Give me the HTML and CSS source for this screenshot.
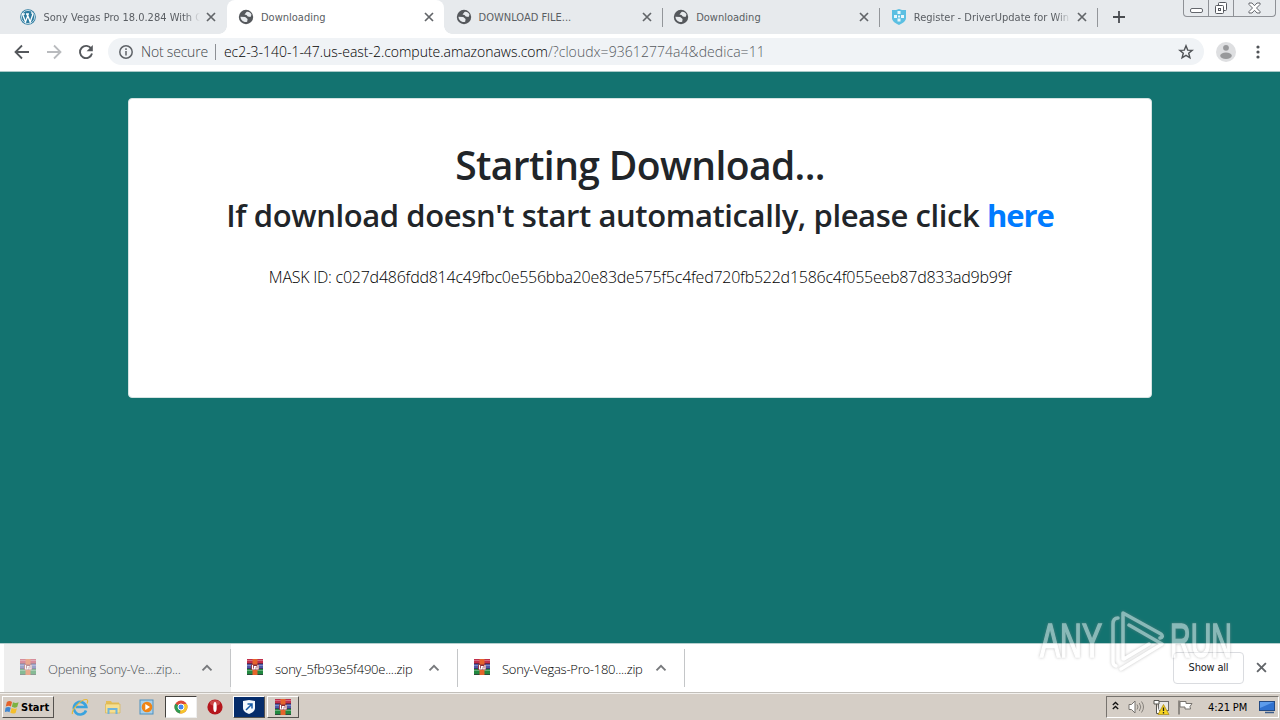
FILE: index.html
```html
<!DOCTYPE html>
<html lang="en">
<head>
    <meta charset="UTF-8">
    <meta name="viewport" content="width=device-width, initial-scale=1.0">
    <title>Downloading</title>
    <link rel="stylesheet" href="styles.css">
</head>
<body>
    <!-- Shared icons -->
    <svg width="0" height="0" class="defs">
        <symbol id="globe" viewBox="0 0 16 16">
            <circle cx="8" cy="8" r="7.2" fill="#55585c"/>
            <path d="M8.500 3c2-.6 4.300.8 5 2.800l-1 2.200-2.700-.6L8.500 6 6.500 5.600zM2.400 7.800l4.800.3L9.600 10l-.4 2.800C6 13.800 2.800 11.500 2.400 7.800z" fill="#e7eaed"/>
        </symbol>
        <symbol id="close" viewBox="0 0 10 10">
            <path d="M1 1l8 8M9 1L1 9" fill="none" stroke="#626569" stroke-width="1.700"/>
        </symbol>
        <symbol id="caret" viewBox="0 0 12 8">
            <path d="M1.500 6.300L6 1.800l4.500 4.500" fill="none" stroke="#77797c" stroke-width="1.900"/>
        </symbol>
        <symbol id="rar" viewBox="0 0 16 16">
            <path d="M0 0h16v5H0z" fill="#c02f4c"/>
            <path d="M0 5h16v5H0z" fill="#4a58a8"/>
            <path d="M0 10h16v6H0z" fill="#21883f"/>
            <path d="M0 1.500h16M0 6.500h16M0 11.500h16" stroke="#fff" stroke-opacity=".3"/>
            <path d="M0 4.500h16M0 9.500h16M0 15.500h16" stroke="#33203a" stroke-opacity=".6"/>
            <path d="M5.500 0h5v16h-5z" fill="#e5642c"/>
            <path d="M4 5.500h8v5.500H4z" fill="#8a2c38"/>
            <path d="M5.500 6v4h2V7.500h1.500V10h2V6" fill="none" stroke="#fff" stroke-width="1.200"/>
        </symbol>
    </svg>

    <!-- Tab strip -->
    <div class="tabs">
        <div class="tab">
            <svg class="favicon" viewBox="0 0 16 16">
                <circle cx="8" cy="8" r="7.800" fill="#2b7a9f"/>
                <circle cx="8" cy="8" r="6.600" fill="none" stroke="#dcecf3" stroke-width=".8"/>
                <path d="M2.500 5l3 8 2.200-6L6.800 5M7.200 5l3 8 2.600-7.500-1.300-2.200M1.800 5h3M6 5h3" fill="none" stroke="#fff" stroke-width="1.300"/>
            </svg>
            <span class="title fade">Sony Vegas Pro 18.0.284 With C</span>
            <svg class="close"><use href="#close"/></svg>
        </div>
        <div class="tab active">
            <svg class="favicon"><use href="#globe"/></svg>
            <span class="title">Downloading</span>
            <svg class="close"><use href="#close"/></svg>
        </div>
        <div class="tab">
            <svg class="favicon"><use href="#globe"/></svg>
            <span class="title">DOWNLOAD FILE...</span>
            <svg class="close"><use href="#close"/></svg>
        </div>
        <div class="tab line">
            <svg class="favicon"><use href="#globe"/></svg>
            <span class="title">Downloading</span>
            <svg class="close"><use href="#close"/></svg>
        </div>
        <div class="tab line">
            <svg class="favicon" viewBox="0 0 16 16">
                <path d="M1 1h4l3-1 3 1h4v8c0 3-3 5-7 7-4-2-7-4-7-7z" fill="#5bbfe2"/>
                <path d="M6.500 2h3v3h-3zM6.500 9.500h3v3h-3zM3 6h3v3H3zM10 6h3v3h-3zM7 6.500h2v2H7z" fill="#e9f7fc"/>
            </svg>
            <span class="title fade">Register - DriverUpdate for Win</span>
            <svg class="close"><use href="#close"/></svg>
        </div>
        <div class="new-tab">
            <svg width="12" height="12" viewBox="0 0 12 12"><path d="M6 0v12M0 6h12" stroke="#494c50" stroke-width="1.800"/></svg>
        </div>
        <div class="window-buttons">
            <span><svg width="13" height="6"><rect x=".5" y=".5" width="12" height="4" rx="1.500" fill="#fff" stroke="#64676d"/></svg></span>
            <span><svg width="14" height="13" fill="#fff" stroke="#55585e"><rect x="4.500" y=".5" width="8" height="8" rx="1"/><rect x="1.500" y="3.500" width="8" height="8" rx="1"/><rect x="4.500" y="6.500" width="2" height="2"/></svg></span>
            <span><svg width="13" height="12" viewBox="0 0 13 12"><path d="M1 1h3l2.500 2.700L9 1h3v1.500L8.500 6l3.500 3.500V11H9L6.500 8.300 4 11H1V9.500L4.500 6 1 2.500z" fill="#fff" stroke="#64676d"/></svg></span>
        </div>
    </div>

    <!-- Toolbar -->
    <div class="toolbar">
        <svg width="16" height="16" viewBox="0 0 16 16"><path d="M15 8H2M8 1.500L1.500 8 8 14.500" fill="none" stroke="#55585c" stroke-width="1.800"/></svg>
        <svg width="16" height="16" viewBox="0 0 16 16"><path d="M1 8h13M8 1.500L14.500 8 8 14.500" fill="none" stroke="#b9bbbe" stroke-width="1.800"/></svg>
        <svg width="16" height="16" viewBox="0 0 16 16"><path d="M13.300 4.800A6.100 6.100 0 1 0 14 9.500" fill="none" stroke="#55585c" stroke-width="1.900"/><path d="M14.800 1v6.200H8.600z" fill="#55585c"/></svg>
        <div class="omnibox">
            <svg width="14" height="14" viewBox="0 0 14 14"><circle cx="7" cy="7" r="6.200" fill="none" stroke="#5f6368" stroke-width="1.500"/><path d="M7 6v4.500M7 3.300v1.600" stroke="#5f6368" stroke-width="1.500"/></svg>
            <span class="secure">Not secure</span>
            <span class="bar"></span>
            <span class="host">ec2-3-140-1-47.us-east-2.compute.amazonaws.com</span><span class="path">/?cloudx=93612774a4&amp;dedica=11</span>
            <svg class="star" width="16" height="16" viewBox="0 0 16 16"><path d="M8 1.800l1.700 4.300 4.500.3-3.500 2.900 1.200 4.500L8 11.300l-3.900 2.500 1.200-4.500-3.500-2.900 4.500-.3z" fill="none" stroke="#505357" stroke-width="1.400"/></svg>
        </div>
        <svg class="avatar" width="20" height="20" viewBox="0 0 20 20"><circle cx="10" cy="10" r="10" fill="#dedfe1"/><circle cx="10" cy="5.800" r="2.900" fill="#98999b"/><ellipse cx="10" cy="13.800" rx="5.800" ry="3.200" fill="#98999b"/></svg>
        <svg class="dots" width="4" height="14" viewBox="0 0 4 14" fill="#505357"><circle cx="2" cy="2" r="1.600"/><circle cx="2" cy="7" r="1.600"/><circle cx="2" cy="12" r="1.600"/></svg>
    </div>

    <!-- Page -->
    <main>
        <div class="card">
            <h1>Starting Download...</h1>
            <h2>If download doesn't start automatically, please click <a href="#">here</a></h2>
            <p>MASK ID: c027d486fdd814c49fbc0e556bba20e83de575f5c4fed720fb522d1586c4f055eeb87d833ad9b99f</p>
        </div>
    </main>

    <!-- Download shelf -->
    <div class="shelf">
        <div class="item opening">
            <svg class="file"><use href="#rar"/></svg>
            <span class="name">Opening Sony-Ve....zip...</span>
            <svg class="caret"><use href="#caret"/></svg>
        </div>
        <div class="item">
            <svg class="file"><use href="#rar"/></svg>
            <span class="name">sony_5fb93e5f490e....zip</span>
            <svg class="caret"><use href="#caret"/></svg>
        </div>
        <div class="item">
            <svg class="file"><use href="#rar"/></svg>
            <span class="name">Sony-Vegas-Pro-180....zip</span>
            <svg class="caret"><use href="#caret"/></svg>
        </div>
        <button class="show-all">Show all</button>
        <svg class="close"><use href="#close"/></svg>
    </div>

    <!-- Taskbar -->
    <div class="taskbar">
        <div class="start">
            <svg width="15" height="15" viewBox="0 0 16 16">
                <path d="M2 2c2-1.500 4-1 5.500 0L6.300 7C5 6 3 6 .8 7z" fill="#e4622a"/>
                <path d="M8.500 2.300c2 1.200 4 1 6 0L13 7.500c-2 1-4 .8-5.700-.2z" fill="#7cb342"/>
                <path d="M.6 8.200c2-1 4-1 5.500 0L4.800 13c-1.500-1-3.500-1-5 0z" fill="#3f86d0"/>
                <path d="M7 8.600c2 1 4 1 5.700.2l-1.400 5c-2 1-4 .8-5.600-.2z" fill="#f4bf2c"/>
            </svg>
            <b>Start</b>
        </div>
        <div class="launch">
            <svg width="18" height="18" viewBox="0 0 18 18"><path d="M15 12.500A6.300 6.300 0 1 1 15.300 9H5" fill="none" stroke="#3aa3de" stroke-width="2.600"/><path d="M1.500 16C0 12 10 1 15.500 1.500c2 .3 1 3 .5 4" fill="none" stroke="#e6b93a" stroke-width="1.200"/></svg>
        </div>
        <div class="launch">
            <svg width="18" height="18" viewBox="0 0 18 18"><path d="M2 3h5l1 1.500h7V8H2z" fill="#e5bd54"/><path d="M1.500 6h14.500v9H1.500z" fill="#f6df90" stroke="#d8b453" stroke-width=".7"/><path d="M4.500 16v-5h8v5" fill="none" stroke="#6fb4dc" stroke-width="2"/></svg>
        </div>
        <div class="launch">
            <svg width="18" height="18" viewBox="0 0 18 18"><rect x="2" y="2" width="13" height="14" fill="#a7cfea" stroke="#4f91bf"/><circle cx="9" cy="9" r="5.300" fill="#ef8416"/><path d="M7.300 6v6l4.700-3z" fill="#fff"/></svg>
        </div>
        <div class="task pressed">
            <svg width="14" height="14" viewBox="0 0 14 14"><circle cx="7" cy="7" r="6.500" fill="#dc4a38"/><path d="M7 7L1.300 3.800A6.500 6.500 0 0 0 6 13.400z" fill="#2e9b52"/><path d="M7 7l-1 6.400A6.500 6.500 0 0 0 12.700 4H7z" fill="#f5c52c"/><circle cx="7" cy="7" r="3" fill="#4286ef" stroke="#fff"/></svg>
        </div>
        <div class="launch">
            <svg width="16" height="16" viewBox="0 0 16 16"><circle cx="8" cy="8" r="7.600" fill="#b5161c"/><ellipse cx="8" cy="4" rx="5" ry="2.800" fill="#dc6a65" opacity=".6"/><ellipse cx="8" cy="8" rx="1.700" ry="5" fill="#fff"/></svg>
        </div>
        <div class="task navy">
            <svg width="16" height="16" viewBox="0 0 16 16"><path d="M2 2l6-1 6 1v7c0 3-3 5-6 6-3-1-6-3-6-6z" fill="#f4f8fd"/><path d="M5 11l5.500-5.500M6.500 5h4.500v4.500" fill="none" stroke="#1759a5" stroke-width="1.500"/></svg>
        </div>
        <div class="task">
            <svg width="16" height="16"><use href="#rar"/></svg>
        </div>
        <div class="tray">
            <svg class="up" width="7" height="9" viewBox="0 0 7 9"><path d="M.8 4l2.700-2.500L6.200 4M.8 8l2.700-2.500L6.200 8" fill="none" stroke="#111" stroke-width="1.300"/></svg>
            <svg class="sound" width="17" height="14" viewBox="0 0 17 14"><path d="M1 4.500h2.500L7 1v12L3.500 9.500H1z" fill="#fff" stroke="#77736e"/><path d="M9 4.500q2 2.500 0 5M11.300 3q3 4 0 8M13.500 1.500q4 5.500 0 11" fill="none" stroke="#85817b"/></svg>
            <svg class="net" width="17" height="16" viewBox="0 0 17 16"><rect x="5.500" y="2.500" width="10" height="9" fill="#e9e9e6" stroke="#6d6c69"/><path d="M1 1.500h5V5H1zM3.500 5v9.500H7" fill="#fff" stroke="#56544f"/><path d="M10.500 5.500l5.500 10H5z" fill="#f6d420" stroke="#a98712" stroke-width=".7"/><path d="M10.500 8.500v3.500M10.500 13v1.500" stroke="#222" stroke-width="1.300"/></svg>
            <svg width="17" height="15" viewBox="0 0 17 15"><path d="M2 .5v14" stroke="#77736e" stroke-width="1.500"/><path d="M3 1.500h6v2h6l-2 3 .5 2.500H8v-2H3z" fill="#fff" stroke="#77736e"/></svg>
            <span class="time">4:21 PM</span>
            <svg width="16" height="14" viewBox="0 0 16 14"><rect x=".5" y="1.500" width="15" height="9" fill="#2f72d0" stroke="#234a83"/><path d="M1 2h14L1 8z" fill="#5c9cec"/><path d="M6 12.500h9" stroke="#3c5c8a" stroke-width="1.500"/></svg>
        </div>
    </div>

    <!-- Watermark over the page and the shelf -->
    <svg class="watermark" width="210" height="70" viewBox="0 0 210 70">
        <text x="8" y="51" textLength="62" lengthAdjust="spacingAndGlyphs">ANY</text>
        <g fill="none" stroke="#fff" stroke-width="3.500" stroke-linejoin="round" stroke-linecap="round">
            <path d="M86 12q-5 0-5 6v38q0 3 3 4"/>
            <path d="M91 53V7l38 21q3 3-1 4M97 19l33 19L89 63M92 53l25-15"/>
        </g>
        <text x="138" y="51" textLength="62" lengthAdjust="spacingAndGlyphs">RUN</text>
    </svg>
</body>
</html>
```
FILE: styles.css
```css
* {
    box-sizing: border-box;
}

body {
    margin: 0;
    width: 1280px;
    height: 720px;
    overflow: hidden;
    display: flex;
    flex-direction: column;
    font-family: "DejaVu Sans Condensed", "DejaVu Sans", sans-serif;
    font-size: 11px;
    color: #3c4043;
}

svg {
    flex: none;
    display: block;
}

.defs {
    position: absolute;
}

/* Tab strip */
.tabs {
    display: flex;
    height: 34px;
    flex: none;
    padding-left: 9px;
    background-color: #e7eaed;
}

.tab {
    display: flex;
    align-items: center;
    width: 217.6px;
    padding-left: 11.4px;
}

.tab.active {
    position: relative;
    background-color: #fff;
    border-radius: 8px 8px 0 0;
}

/* curved feet of the active tab */
.tab.active::before,
.tab.active::after {
    content: "";
    position: absolute;
    bottom: 0;
    width: 8px;
    height: 8px;
}

.tab.active::before {
    left: -8px;
    background: radial-gradient(circle at 0 0, transparent 7.5px, #fff 8px);
}

.tab.active::after {
    right: -8px;
    background: radial-gradient(circle at 100% 0, transparent 7.5px, #fff 8px);
}

.tab.line,
.new-tab {
    background: linear-gradient(#93969a, #93969a) 0 8px / 1px 19px no-repeat;
}

.favicon {
    width: 16px;
    height: 16px;
    margin-right: 7px;
}

.title {
    width: 158px;
    white-space: nowrap;
    color: #5a5e63;
}

.fade {
    -webkit-mask-image: linear-gradient(to right, #000 142px, transparent 157px);
    mask-image: linear-gradient(to right, #000 142px, transparent 157px);
}

.tab .close {
    width: 10px;
    height: 10px;
    margin-left: 5px;
}

.new-tab {
    width: 40px;
    padding: 11px 0 0 16px;
}

.window-buttons {
    display: flex;
    width: 93px;
    height: 17px;
    margin: 0 4px 0 auto;
    border: 1px solid #8e9196;
    border-top: 0;
    border-radius: 0 0 4px 4px;
}

.window-buttons span {
    display: flex;
    justify-content: center;
    align-items: center;
    width: 25px;
    border-right: 1px solid #8e9196;
}

.window-buttons span:first-child {
    padding-top: 5px;
}

.window-buttons span:last-child {
    flex: 1;
    border-right: 0;
}

/* Toolbar */
.toolbar {
    display: flex;
    align-items: center;
    gap: 16px;
    height: 38px;
    flex: none;
    padding: 0 20px 2px 14px;
    background-color: #fff;
    border-bottom: 1px solid #a9c9c8;
}

.omnibox {
    display: flex;
    align-items: center;
    width: 1096px;
    height: 27px;
    margin-left: -2px;
    padding: 0 10px 0 11px;
    border-radius: 14px;
    background-color: #f0f3f6;
    font-family: "Open Sans", sans-serif;
    font-size: 14px;
    font-weight: 300;
    white-space: nowrap;
}

.secure {
    margin-left: 8px;
    letter-spacing: -0.2px;
    color: #404448;
}

.bar {
    width: 1px;
    height: 16px;
    margin: 0 8px 0 7px;
    background-color: #8d9095;
}

.host {
    color: #000;
    letter-spacing: -0.03px;
}

.path {
    color: #55595e;
    letter-spacing: 0.06px;
}

.star {
    margin-left: auto;
}

.avatar {
    margin-left: -4px;
}

.dots {
    margin-left: 4px;
}

/* Page */
main {
    flex: 1;
    padding-top: 26px;
    background-color: #137370;
}

.card {
    width: 1024px;
    height: 300px;
    margin: 0 auto;
    padding-top: 42px;
    background-color: #fff;
    border: 1px solid #d5e3e2;
    border-radius: 4px;
    text-align: center;
    font-family: "Open Sans", sans-serif;
    color: #212529;
    white-space: nowrap;
}

.card h1 {
    margin: 0 0 7px;
    font-size: 39px;
    font-weight: 600;
    line-height: 48px;
    letter-spacing: -0.6px;
}

.card h2 {
    margin: 0;
    font-size: 31px;
    font-weight: 600;
    line-height: 38px;
    letter-spacing: -0.4px;
}

.card a {
    color: #007bff;
    text-decoration: none;
    font-weight: 700;
    letter-spacing: -1.1px;
}

.card p {
    margin: 31px 0 0;
    font-size: 16px;
    font-weight: 300;
    line-height: 24px;
    letter-spacing: -0.24px;
    color: #000;
}

/* Download shelf */
.shelf {
    display: flex;
    align-items: center;
    height: 49px;
    flex: none;
    padding-left: 4px;
    background-color: #fff;
    border-top: 1px solid #b5cfce;
}

.item {
    display: flex;
    align-items: center;
    width: 227px;
    height: 48px;
    padding-left: 16px;
    background: linear-gradient(#c4c6c8, #c4c6c8) 100% 5px / 1px 38px no-repeat;
    font-family: "Open Sans", sans-serif;
    font-size: 13px;
    font-weight: 300;
    color: #000;
}

.opening {
    background-color: #eeeeee;
    color: #4c4f53;
}

.file {
    width: 16px;
    height: 16px;
    margin: 0 12px 2px 0;
}

.opening .file {
    opacity: 0.5;
}

.name {
    width: 153px;
    padding-top: 1px;
    letter-spacing: -0.25px;
    white-space: nowrap;
}

.caret {
    width: 12px;
    height: 8px;
}

.show-all {
    width: 71px;
    height: 32px;
    margin-left: auto;
    padding: 0 0 2px;
    background-color: #fff;
    border: 1px solid #dadce0;
    border-radius: 4px;
    font-family: inherit;
    font-size: 11px;
    letter-spacing: -0.2px;
    color: #202124;
}

.shelf > .close {
    width: 11px;
    height: 11px;
    margin: 0 13px 2px 12px;
}

/* Taskbar */
.taskbar {
    display: flex;
    align-items: center;
    height: 28px;
    flex: none;
    padding: 1px 1px 0 2px;
    background-color: #d5cec6;
    border-top: 1px solid #c2bfba;
    box-shadow: inset 0 1px #f3f1ee;
}

.start {
    display: flex;
    align-items: center;
    gap: 1px;
    width: 52px;
    height: 22px;
    margin-right: 13px;
    padding-left: 2px;
    border: 1px solid;
    border-color: #fff #55524e #55524e #fff;
    color: #000;
}

.launch {
    display: flex;
    justify-content: center;
    width: 33.5px;
    padding-right: 2px;
}

.launch:nth-child(2) {
    width: 25px;
    padding-right: 0;
}

.launch:nth-child(3) {
    width: 42px;
    padding-right: 0;
}

.launch:nth-child(4) {
    width: 26px;
    margin-right: 5px;
    padding-right: 0;
}

.task {
    display: flex;
    justify-content: center;
    align-items: center;
    width: 32px;
    height: 22px;
    margin-right: 2px;
    border: 1px solid;
    border-color: #fff #55524e #55524e #fff;
}

.pressed {
    background-color: #fff;
    border-color: #44423f #eee #eee #44423f;
}

.navy {
    background-color: #062c6a;
}

.tray {
    display: flex;
    align-items: center;
    width: 173px;
    height: 22px;
    margin-left: auto;
    padding-left: 5px;
    border: 1px solid;
    border-color: #77736e #fff #fff #77736e;
    color: #000;
}

.up {
    margin: 0 9px 3px 0;
}

.sound {
    margin-right: 8px;
}

.net {
    margin-right: 7px;
}

.time {
    width: 51px;
    margin-left: 14px;
    letter-spacing: -0.1px;
    white-space: nowrap;
}

/* Watermark */
.watermark {
    position: absolute;
    left: 1032px;
    top: 606px;
    opacity: 0.5;
    filter: drop-shadow(0 0 1.5px #888);
}

.watermark text {
    font-family: "Liberation Sans", sans-serif;
    font-size: 49px;
    fill: #fff;
    stroke: #fff;
    stroke-width: 1.6px;
}
```
